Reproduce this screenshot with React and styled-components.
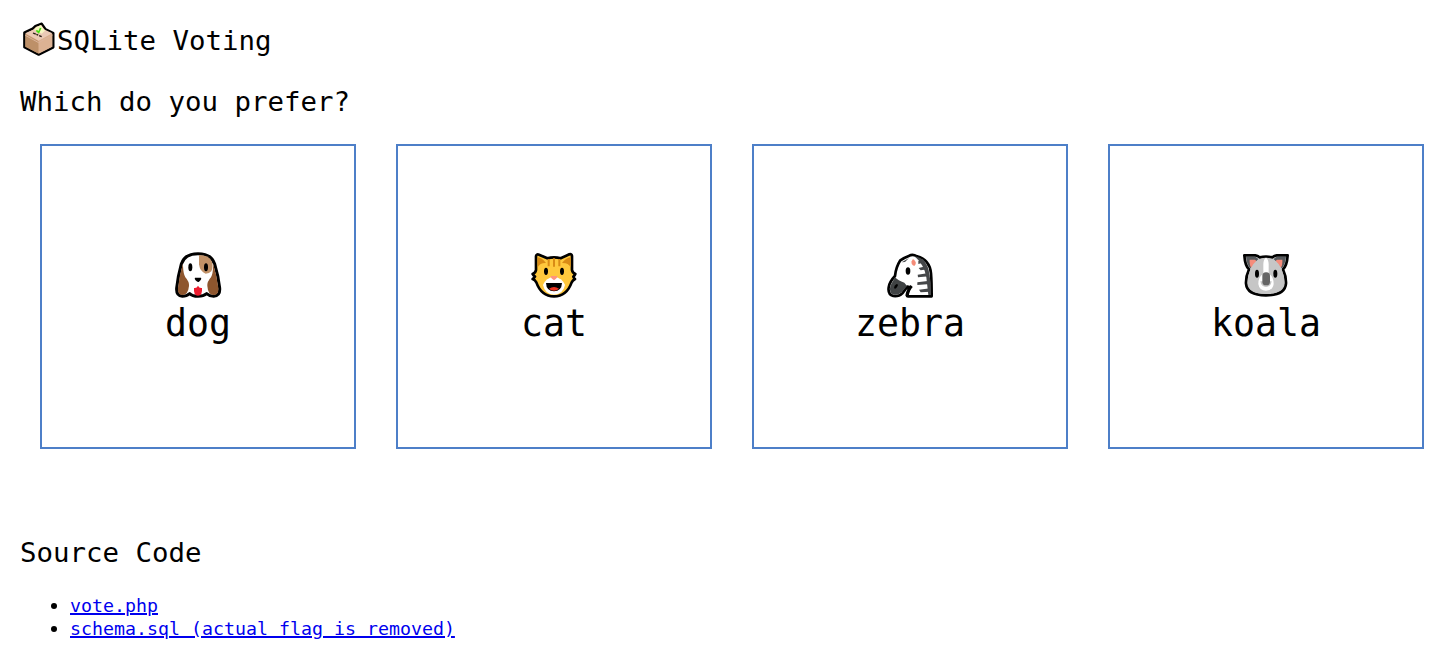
import React from 'react';
import styled, { createGlobalStyle } from 'styled-components';

const GlobalStyle = createGlobalStyle`
  body { margin: 0; background: #fff; color: #000; }
  * { box-sizing: border-box; }
`;

const Page = styled.main`
  width: 1439px;
  height: 660px;
  overflow: hidden;
  padding: 16px 15px 0 20px;
  font-family: Consolas, 'DejaVu Sans Mono', monospace;
`;

const Heading = styled.h1`
  display: flex;
  align-items: center;
  margin: 0 0 ${(p) => p.$gap}px;
  height: ${(p) => p.$height || 36}px;
  font-size: 27.41px;
  line-height: 36px;
  font-weight: 400;
`;

const TitleText = styled.span`
  padding-top: 6px;
`;

const BallotIcon = styled.svg`
  width: 44px;
  height: 44px;
  margin: 0 -3px 0 -4px;
  flex: none;
`;

const Choices = styled.section`
  display: grid;
  grid-template-columns: repeat(4, 316px);
  column-gap: 40px;
  margin: 0 0 86px 20px;
`;

const Choice = styled.div`
  display: flex;
  flex-direction: column;
  align-items: center;
  height: 305px;
  padding-top: 100px;
  border: 2px solid #4d7fc8;
  cursor: pointer;
`;

const AnimalIcon = styled.svg`
  width: 56px;
  height: 56px;
  flex: none;
`;

const Name = styled.span`
  font-size: 36.54px;
  line-height: 44px;
`;

const Files = styled.ul`
  margin: 0;
  padding: 0;
  list-style: none;
`;

const FileItem = styled.li`
  display: flex;
  align-items: center;
  height: 23px;
  padding-left: 31px;
  font-size: 18.27px;
  line-height: 23px;

  &::before {
    content: '';
    width: 6px;
    height: 6px;
    margin-right: 13px;
    border-radius: 50%;
    background: #000;
  }
`;

const FileLink = styled.a`
  color: #0000ee;
  text-decoration: underline;
  text-decoration-thickness: 2px;
  text-underline-offset: 1px;
`;

const Ballot = () => (
  <BallotIcon viewBox="0 0 132 132">
    <path d="M25 50 L50 38 L58 30 L77 23 L89 40 L112 51 V94 L68 116 L25 94Z" fill="#d9ae8b" stroke="#000" strokeWidth="7" strokeLinejoin="round" />
    <path d="M28 52 L69 33 L109 52 L68 74Z" fill="#ebcab6" />
    <path d="M28 54 L68 76 V113 L28 92Z" fill="#bd9068" />
    <path d="M68 76 L109 54 V92 L68 113Z" fill="#dcb293" />
    <path d="M28 58 L68 80 L109 58" fill="none" stroke="#dcb59c" strokeWidth="3" />
    <path d="M54 40 L61 33 L75 27 L87 44 L77 53Z" fill="#f8f6c4" />
    <path d="M61 43 L68 49 L74 36" fill="none" stroke="#44e010" strokeWidth="5" />
    <path d="M51 51 L77 62" stroke="#23160f" strokeWidth="4" strokeDasharray="9 2 6 3" />
  </BallotIcon>
);

const Dog = () => (
  <AnimalIcon viewBox="0 0 168 168">
    <path d="M84 23 Q124 23 134 54 Q145 90 149 126 Q151 149 131 151 Q119 151 110 143 Q101 151 84 151 Q67 151 59 143 Q50 151 37 151 Q18 149 20 126 Q24 90 34 54 Q44 23 84 23Z" fill="#fff" stroke="#000" strokeWidth="9" strokeLinejoin="round" />
    <path d="M39 53 Q28 86 24 125 Q22 145 36 147 Q54 148 57 120 Q58 107 46 94 Q40 84 39 60Z M129 53 Q140 86 145 125 Q147 145 132 147 Q114 148 112 120 Q111 107 123 94 Q129 84 129 60Z" fill="#8e562e" />
    <path d="M87 27 Q116 27 125 46 Q131 60 124 76 Q118 83 107 83 Q90 78 87 55Z" fill="#c19167" />
    <ellipse cx="61" cy="64" rx="6" ry="12" />
    <ellipse cx="108" cy="64" rx="6" ry="12" />
    <path d="M75 95 H93 Q96 99 87 107 Q84 109 80 106 Q72 99 75 95Z" />
    <path d="M84 119 Q88 128 96 126 Q98 149 84 149 Q70 149 72 126 Q80 128 84 119Z" fill="#ec1b2e" />
  </AnimalIcon>
);

const Cat = () => (
  <AnimalIcon viewBox="0 0 168 168">
    <path d="M30 31 Q31 23 39 26 L64 37 Q84 31 104 37 L130 25 Q138 23 138 31 V72 Q139 80 148 84 Q145 89 142 92 Q144 97 147 99 Q140 103 137 109 Q122 151 84 151 Q46 151 31 109 Q27 102 20 99 Q24 97 27 92 Q23 89 20 84 Q29 80 30 72Z" fill="#ffc83d" stroke="#000" strokeWidth="8" strokeLinejoin="round" />
    <path d="M35 34 Q47 35 60 51 Q42 50 35 64Z M134 34 Q121 35 108 51 Q127 50 134 64Z" fill="#d98b16" />
    <path d="M65 39 H71 V61 H65Z M81 37 H87 V62 H81Z M97 39 H103 V61 H97Z" fill="#d98b16" />
    <ellipse cx="60" cy="76" rx="6" ry="11" />
    <ellipse cx="108" cy="76" rx="6" ry="11" />
    <path d="M84 91 Q110 98 117 117 Q111 145 84 146 Q57 145 51 117 Q58 98 84 91Z" fill="#fff" />
    <path d="M75 90 H93 Q98 93 84 103 Q70 93 75 90Z" fill="#ff947e" />
    <path d="M60 111 H108 Q107 135 84 136 Q61 135 60 111Z" />
    <path d="M69 128 Q84 118 99 128 Q92 134 84 134 Q75 134 69 128Z" fill="#e93220" />
  </AnimalIcon>
);

const Zebra = () => (
  <AnimalIcon viewBox="0 0 168 168">
    <path d="M55 43 Q68 34 82 29 Q92 23 105 31 Q143 41 147 82 Q149 106 149 151 H78 Q72 151 76 141 L83 123 L76 122 L61 142 Q51 152 34 150 Q17 145 20 124 Q22 108 39 90 Q42 63 55 43Z" fill="#fff" stroke="#000" strokeWidth="8" strokeLinejoin="round" />
    <path d="M39 94 Q48 104 67 110 L75 120 L59 139 Q50 148 35 146 Q20 141 25 119Z" fill="#404344" />
    <ellipse cx="42" cy="121" rx="4" ry="8" transform="rotate(35 42 121)" />
    <path d="M98 31 Q135 37 142 83 L146 111 V147 H139 L133 94 Q127 57 98 31Z" fill="#454749" />
    <path d="M109 45 L122 39 L130 48 L109 54Z M110 66 L134 60 L138 70 L116 73Z M107 86 L140 81 L142 91 L108 94Z M106 109 L143 104 L145 114 L106 117Z M111 131 L145 127 V137 L116 139Z" fill="#454749" />
    <path d="M59 49 L81 36 L69 48Z" fill="#4a4c4e" />
    <path d="M93 39 Q108 49 97 60 Q86 56 89 46Z" fill="#f58c78" />
    <ellipse cx="78" cy="75" rx="7" ry="11" />
    <path d="M76 150 Q77 133 89 120" fill="none" stroke="#000" strokeWidth="9" />
  </AnimalIcon>
);

const Koala = () => (
  <AnimalIcon viewBox="0 0 168 168">
    <path d="M19 28 H52 Q60 29 65 34 Q84 30 103 34 Q108 29 116 28 H149 Q147 59 135 70 Q145 92 144 113 Q141 148 84 148 Q27 148 24 113 Q23 92 33 70 Q21 59 19 28Z" fill="#c8c8c8" stroke="#000" strokeWidth="8" strokeLinejoin="round" />
    <path d="M24 32 H52 L61 39 L37 67 Q27 58 24 32Z M144 32 H116 L107 39 L131 67 Q141 58 144 32Z" fill="#55595c" />
    <path d="M35 41 H51 L58 47 L39 65 Q34 59 35 41Z M133 41 H117 L110 47 L129 65 Q134 59 133 41Z" fill="#f58c7b" />
    <path d="M68 38 Q84 33 100 38 Q127 47 136 86 Q144 116 130 131 Q114 144 84 144 Q54 144 38 131 Q24 116 32 86 Q41 47 68 38Z" fill="#c6c6c6" />
    <path d="M84 35 Q92 40 92 55 V83 Q107 91 107 114 Q104 134 84 134 Q64 134 61 114 Q61 91 76 83 V55 Q76 40 84 35Z" fill="#fff" />
    <ellipse cx="57" cy="83" rx="6" ry="12" />
    <ellipse cx="112" cy="83" rx="6" ry="12" />
    <path d="M67 106 Q70 123 84 123 Q98 123 101 106" fill="#c6c6c6" />
    <rect x="73" y="79" width="23" height="39" rx="11" fill="#666" />
  </AnimalIcon>
);

const animals = [
  { name: 'dog', Icon: Dog },
  { name: 'cat', Icon: Cat },
  { name: 'zebra', Icon: Zebra },
  { name: 'koala', Icon: Koala },
];

const files = ['vote.php', 'schema.sql (actual flag is removed)'];

export default function App() {
  return (
    <>
      <GlobalStyle />
      <Page>
        <Heading $height={44} $gap={24}><Ballot /><TitleText>SQLite Voting</TitleText></Heading>
        <Heading as="h2" $gap={24}>Which do you prefer?</Heading>
        <Choices>
          {animals.map(({ name, Icon }) => (
            <Choice key={name}><Icon /><Name>{name}</Name></Choice>
          ))}
        </Choices>
        <Heading as="h2" $gap={23}>Source Code</Heading>
        <Files>
          {files.map((file) => (
            <FileItem key={file}><FileLink href="#">{file}</FileLink></FileItem>
          ))}
        </Files>
      </Page>
    </>
  );
}
